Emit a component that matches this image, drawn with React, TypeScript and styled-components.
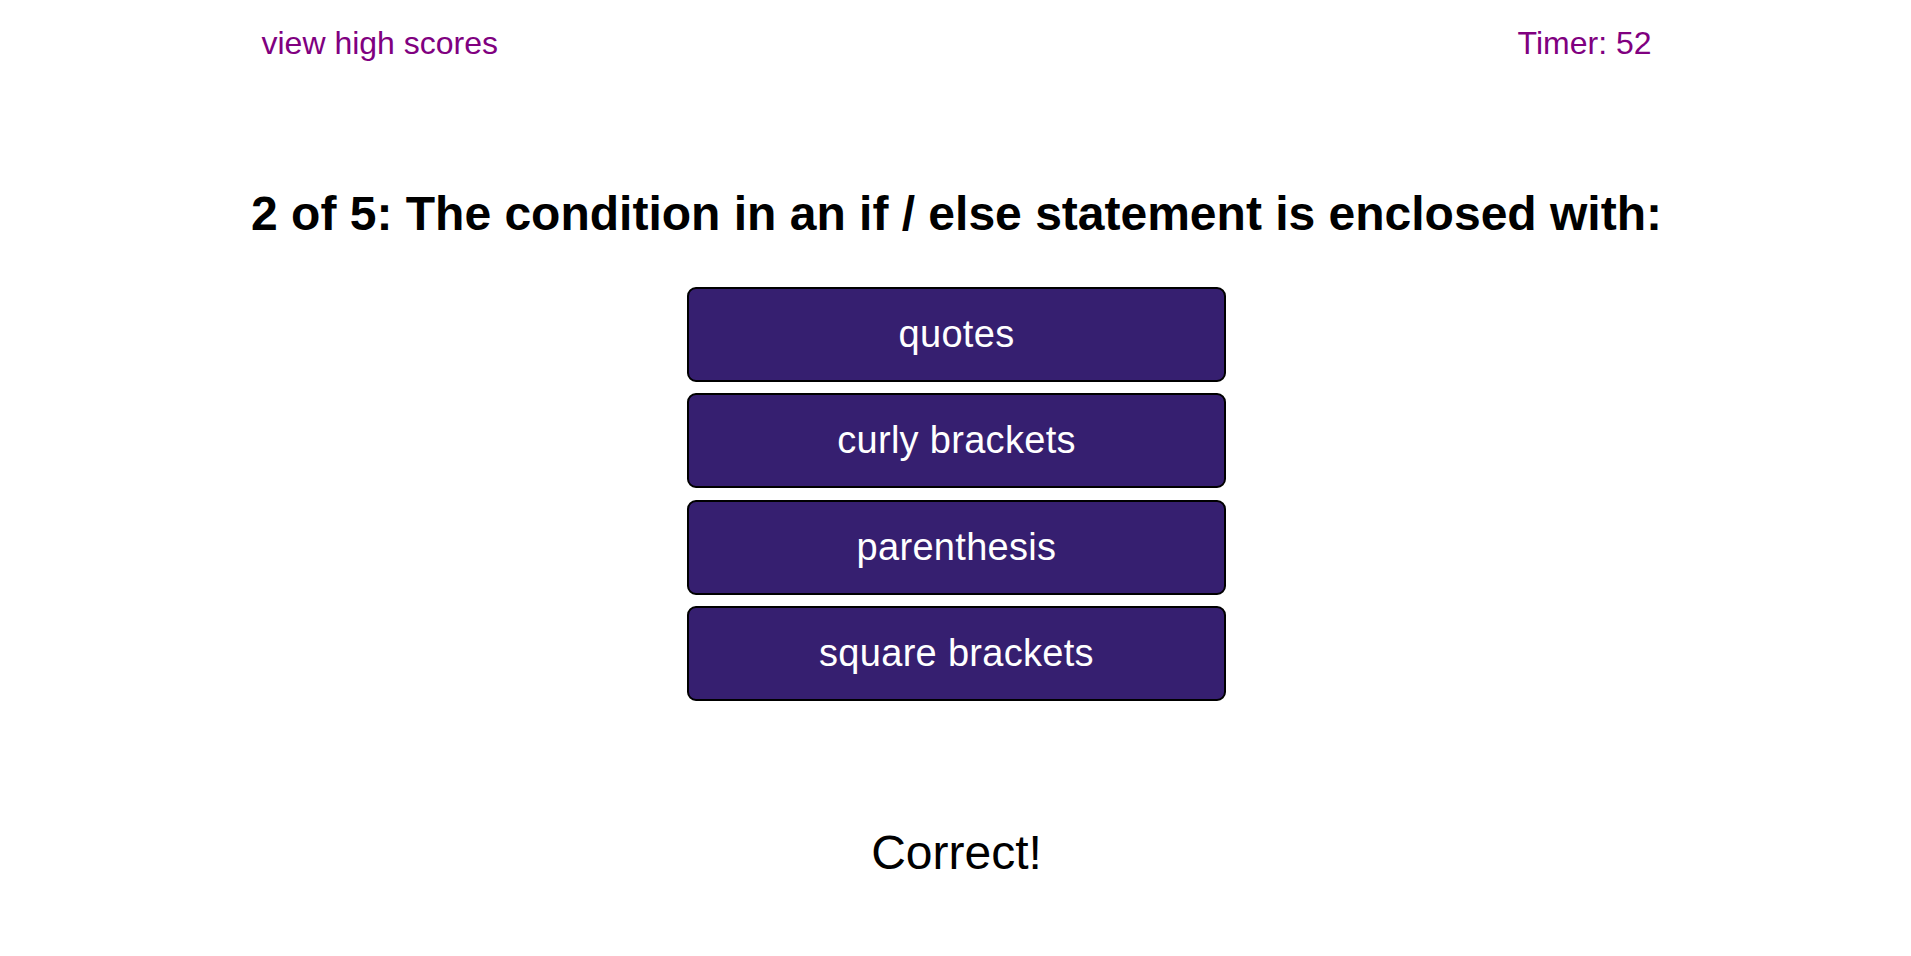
import React from "react";
import styled, { createGlobalStyle } from "styled-components";

const GlobalStyle = createGlobalStyle`
  html, body {
    margin: 0;
    padding: 0;
    background: #ffffff;
  }
  body {
    font-family: "Liberation Sans", Arial, sans-serif;
  }
`;

const Page = styled.div`
  display: flex;
  flex-direction: column;
  align-items: center;
  min-height: 956px;
  padding-left: 2px;
`;

const Header = styled.header`
  display: flex;
  justify-content: space-between;
  align-items: center;
  width: 1390px;
  padding-top: 25px;
`;

const HeaderLink = styled.a`
  color: #800080;
  font-size: 32px;
  text-decoration: none;
  cursor: pointer;
`;

const HeaderText = styled.span`
  color: #800080;
  font-size: 32px;
`;

const Question = styled.h1`
  margin: 123.5px 0 0;
  font-size: 48px;
  font-weight: 700;
  color: #000000;
  text-align: center;
`;

const Choices = styled.div`
  display: flex;
  flex-direction: column;
  gap: 11.3px;
  margin-top: 46.5px;
`;

const Choice = styled.button`
  width: 539px;
  height: 95px;
  background: #361f70;
  color: #ffffff;
  border: 2px solid #000000;
  border-radius: 9px;
  font-family: "Liberation Sans", Arial, sans-serif;
  font-size: 38px;
  letter-spacing: 0.3px;
  padding: 0;
  cursor: pointer;
`;

const Feedback = styled.p`
  margin: 124.5px 0 0;
  font-size: 48px;
  color: #000000;
`;

const answers = ["quotes", "curly brackets", "parenthesis", "square brackets"];

export default function App() {
  return (
    <>
      <GlobalStyle />
      <Page>
        <Header>
          <HeaderLink>view high scores</HeaderLink>
          <HeaderText>Timer: 52</HeaderText>
        </Header>
        <Question>2 of 5: The condition in an if / else statement is enclosed with:</Question>
        <Choices>
          {answers.map((a) => (
            <Choice key={a}>{a}</Choice>
          ))}
        </Choices>
        <Feedback>Correct!</Feedback>
      </Page>
    </>
  );
}
